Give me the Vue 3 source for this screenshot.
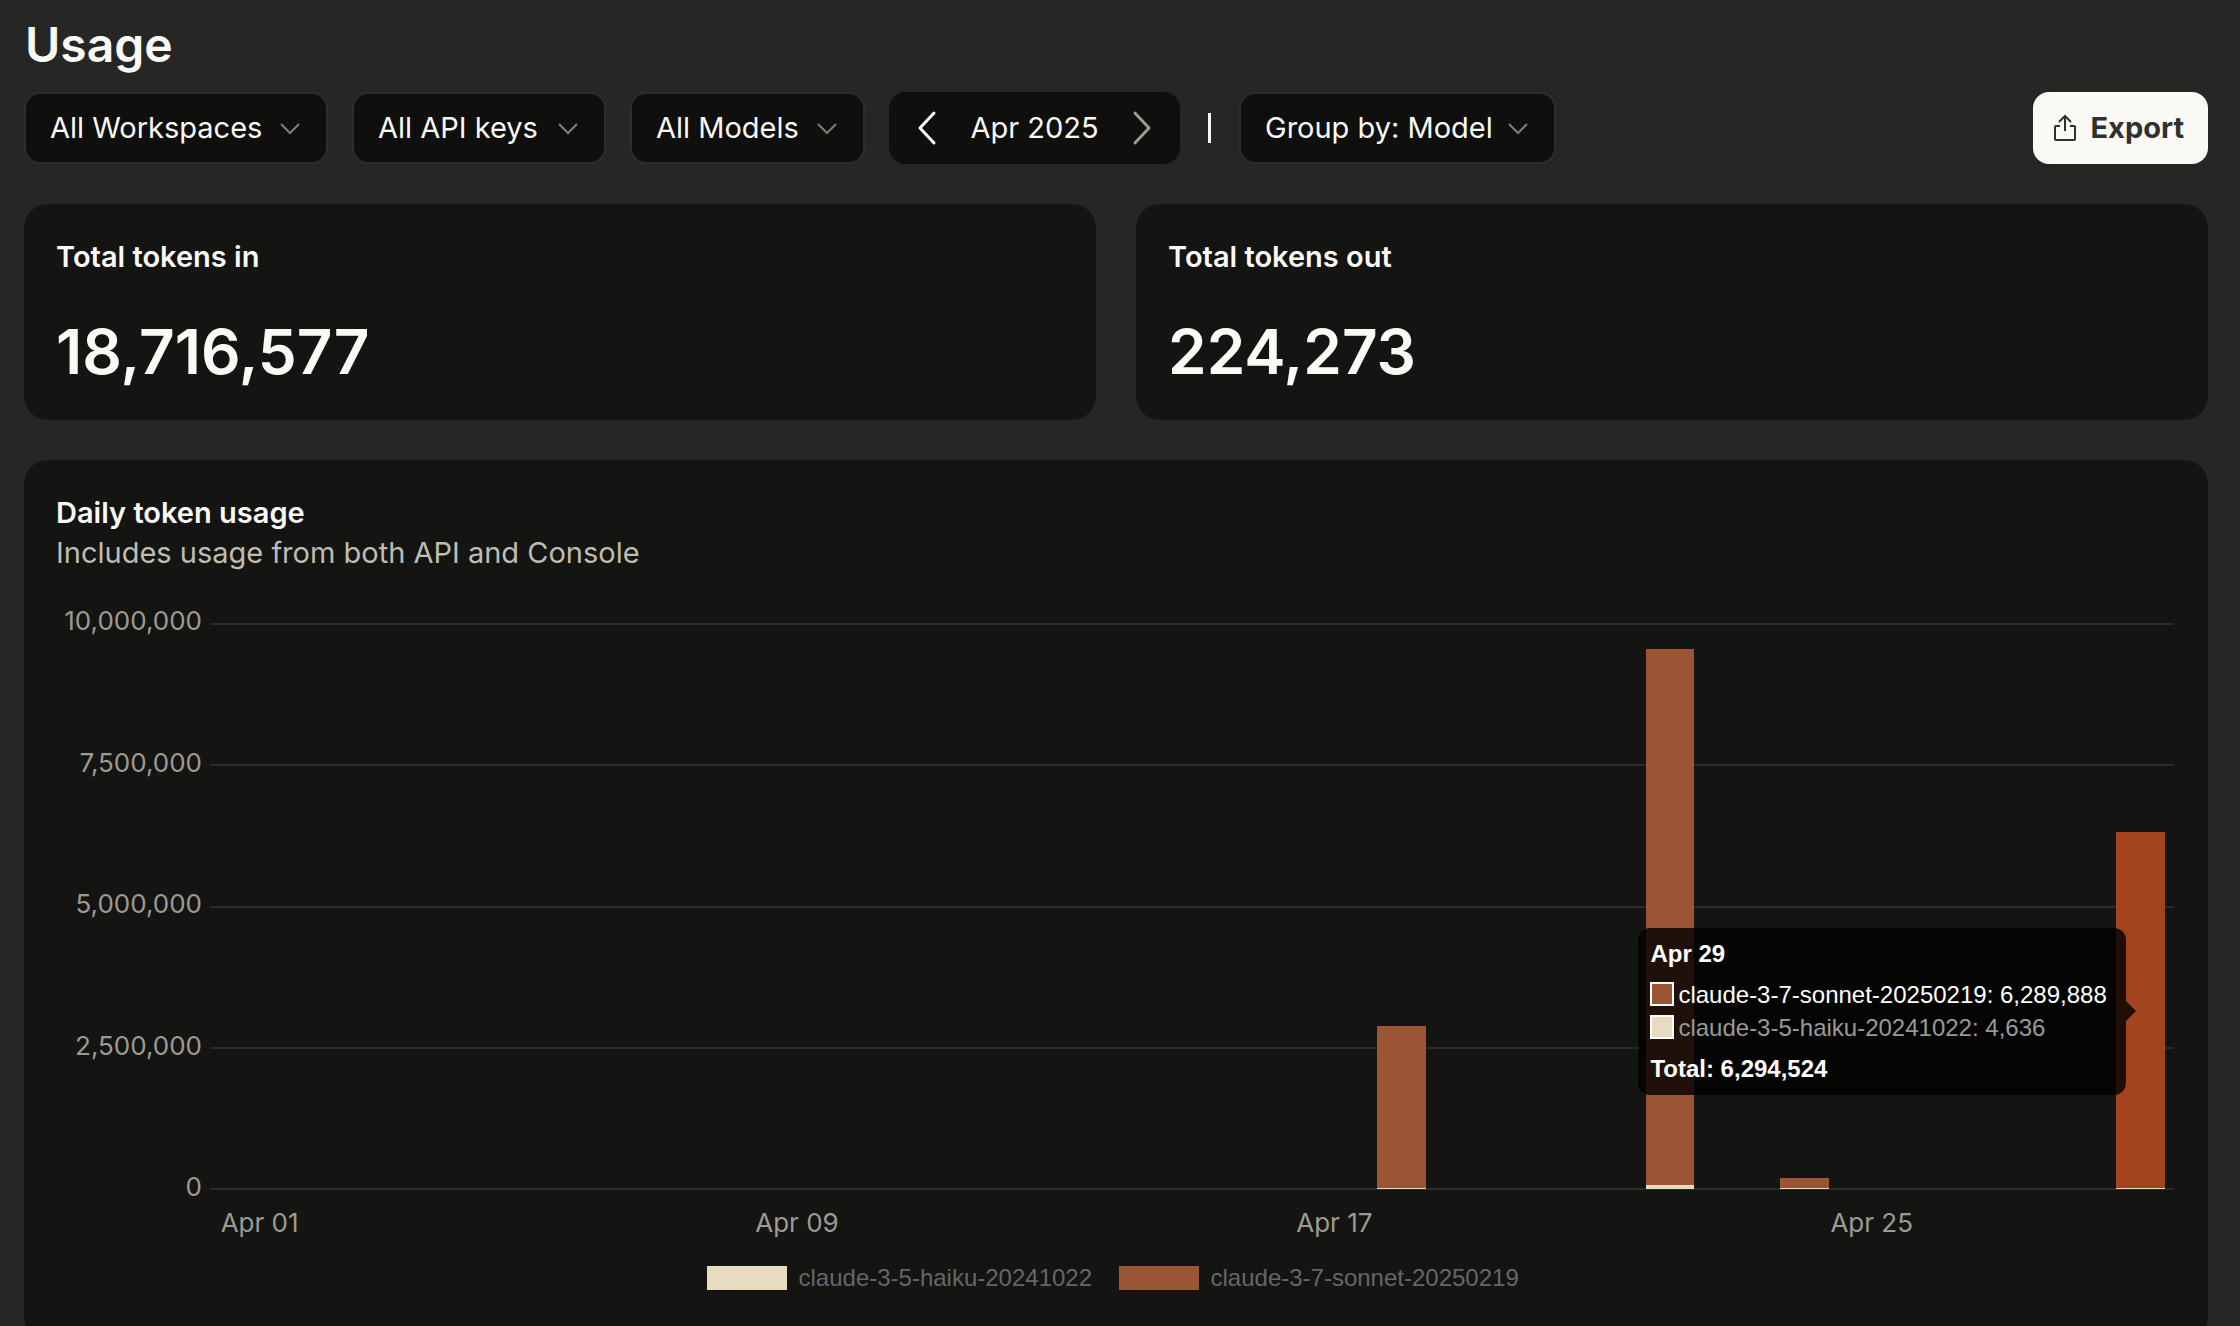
<script setup>
const HAIKU = 'claude-3-5-haiku-20241022'
const SONNET = 'claude-3-7-sonnet-20250219'
const MAX = 10000000

const filters = [
  { id: 'workspaces', label: 'Workspace', text: 'All Workspaces' },
  { id: 'api-keys', label: 'API key', text: 'All API keys' },
  { id: 'models', label: 'Model', text: 'All Models' },
]

const totals = [
  { title: 'Total tokens in', value: '18,716,577' },
  { title: 'Total tokens out', value: '224,273' },
]

const ticks = ['10,000,000', '7,500,000', '5,000,000', '2,500,000', '0']

const usage = {
  18: { sonnet: 2855000, haiku: 12000 },
  22: { sonnet: 9470000, haiku: 70000 },
  24: { sonnet: 175000, haiku: 12000 },
  29: { sonnet: 6289888, haiku: 4636, active: true },
}

const days = Array.from({ length: 29 }, (_, i) => {
  const day = i + 1
  return {
    day,
    label: i % 8 === 0 ? 'Apr ' + String(day).padStart(2, '0') : '',
    data: usage[day],
  }
})

const share = (tokens) => (tokens / MAX) * 100 + '%'
</script>

<template>
  <main class="page">
    <h1>Usage</h1>

    <div class="toolbar">
      <div v-for="f in filters" :key="f.id" class="picker" :class="f.id">
        <select :id="f.id" :aria-label="f.label">
          <option>{{ f.text }}</option>
        </select>
        <svg class="chevron" viewBox="0 0 20 12" aria-hidden="true"><path d="M1 1l9 9 9-9" /></svg>
      </div>

      <div class="month">
        <button type="button" aria-label="Previous month">
          <svg viewBox="0 0 20 34" aria-hidden="true"><path d="M17 2L3 17l14 15" /></svg>
        </button>
        <span>Apr 2025</span>
        <button type="button" class="next" aria-label="Next month">
          <svg viewBox="0 0 20 34" aria-hidden="true"><path d="M3 2l14 15L3 32" /></svg>
        </button>
      </div>

      <span class="divider"></span>

      <div class="picker group">
        <select id="group-by" aria-label="Group by">
          <option>Group by: Model</option>
        </select>
        <svg class="chevron" viewBox="0 0 20 12" aria-hidden="true"><path d="M1 1l9 9 9-9" /></svg>
      </div>

      <button type="button" class="export">
        <svg viewBox="0 0 24 28" aria-hidden="true">
          <path d="M7 12H3q-1 0-1 1v12q0 1 1 1h18q1 0 1-1V13q0-1-1-1h-4M12 17V2M6 8l6-6 6 6" />
        </svg>
        Export
      </button>
    </div>

    <div class="totals">
      <section v-for="t in totals" :key="t.title" class="card total">
        <h2>{{ t.title }}</h2>
        <p>{{ t.value }}</p>
      </section>
    </div>

    <section class="card usage">
      <h2>Daily token usage</h2>
      <p class="note">Includes usage from both API and Console</p>

      <div class="chart">
        <div class="y-axis">
          <span v-for="t in ticks" :key="t">{{ t }}</span>
        </div>
        <div class="plot">
          <div class="lines"><i v-for="t in ticks" :key="t"></i></div>
          <div class="bars">
            <div v-for="d in days" :key="d.day" class="day">
              <template v-if="d.data">
                <div class="sonnet" :class="{ active: d.data.active }" :style="{ height: share(d.data.sonnet) }"></div>
                <div class="haiku" :style="{ height: share(d.data.haiku) }"></div>
                <div v-if="d.data.active" class="anchor" :style="{ height: share(d.data.sonnet) }">
                  <div class="tooltip" role="tooltip">
                    <strong>Apr 29</strong>
                    <ul>
                      <li><i class="key sonnet"></i>{{ SONNET }}: 6,289,888</li>
                      <li class="dim"><i class="key haiku"></i>{{ HAIKU }}: 4,636</li>
                    </ul>
                    <strong>Total: 6,294,524</strong>
                  </div>
                </div>
              </template>
            </div>
          </div>
        </div>
        <div class="x-axis">
          <div v-for="d in days" :key="d.day"><span v-if="d.label">{{ d.label }}</span></div>
        </div>
      </div>

      <ul class="legend">
        <li><i class="haiku"></i>{{ HAIKU }}</li>
        <li><i class="sonnet"></i>{{ SONNET }}</li>
      </ul>
    </section>
  </main>
</template>

<style>
body {
  margin: 0;
  background: #262624;
}
</style>

<style scoped>
* {
  box-sizing: border-box;
}
.page {
  height: 100vh;
  overflow: hidden;
  padding: 15px 32px 0 24px;
  color: #faf9f5;
  font: 29px/40px Inter, "Liberation Sans", sans-serif;
}
h1, h2, p, ul {
  margin: 0;
  padding: 0;
}
ul {
  list-style: none;
}
h1 {
  padding-left: 1px;
  font-size: 48px;
  font-weight: 600;
  line-height: 60px;
}
h2 {
  font-size: 29px;
  font-weight: 600;
  line-height: 40px;
}

.toolbar {
  display: flex;
  align-items: center;
  gap: 24px;
  height: 72px;
  margin: 17px 0 40px;
}
.picker {
  position: relative;
  height: 72px;
}
.picker select {
  appearance: none;
  width: 100%;
  height: 100%;
  padding: 0 24px;
  border: 2px solid #2d2d2b;
  border-radius: 16px;
  background: #0f0f0d;
  color: inherit;
  font: inherit;
}
.workspaces { width: 304px; }
.api-keys { width: 254px; }
.models { width: 235px; }
.group { width: 317px; }
.chevron {
  position: absolute;
  top: 31px;
  right: 28px;
  width: 20px;
  height: 12px;
  fill: none;
  stroke: #7d7c77;
  stroke-width: 2;
  pointer-events: none;
}
.month {
  display: flex;
  align-items: center;
  justify-content: space-between;
  width: 291px;
  height: 72px;
  padding: 0 28px;
  border-radius: 16px;
  background: #0f0f0d;
}
.month button {
  display: flex;
  padding: 0;
  border: 0;
  background: none;
  color: #faf9f5;
}
.month .next {
  color: #9c9a92;
}
.month svg {
  width: 20px;
  height: 36px;
  fill: none;
  stroke: currentColor;
  stroke-width: 3;
  stroke-linecap: round;
  stroke-linejoin: round;
}
.divider {
  width: 3px;
  height: 30px;
  margin: 0 4px;
  background: #faf9f5;
}
.export {
  display: flex;
  align-items: center;
  gap: 14px;
  height: 72px;
  margin-left: auto;
  padding: 0 24px 0 20px;
  border: 0;
  border-radius: 16px;
  background: #faf9f5;
  color: #30302e;
  font: inherit;
  font-weight: 700;
}
.export svg {
  width: 24px;
  height: 28px;
  fill: none;
  stroke: currentColor;
  stroke-width: 2;
}

.card {
  border-radius: 24px;
  background: #141412;
}
.totals {
  display: grid;
  grid-template-columns: 1fr 1fr;
  gap: 40px;
}
.total {
  padding: 33px 32px 28px;
}
.total p {
  margin-top: 35px;
  font-size: 62px;
  font-weight: 600;
  line-height: 80px;
}
.usage {
  margin-top: 40px;
  padding: 33px 32px 48px;
}
.note {
  color: #bfbdb1;
}

.chart {
  display: grid;
  grid-template-columns: 146px 1fr;
  grid-template-rows: 566px auto;
  column-gap: 24px;
  margin-top: 50px;
  padding-right: 2px;
  color: #9c9a92;
  font-size: 26px;
  line-height: 28px;
}
.y-axis {
  display: flex;
  flex-direction: column;
  justify-content: space-between;
  margin: -16px 0 -12px;
  text-align: right;
}
.plot {
  position: relative;
}
.lines {
  position: absolute;
  inset: 0 0 -1px -16px;
  display: flex;
  flex-direction: column;
  justify-content: space-between;
}
.lines i {
  height: 2px;
  background: #2b2b29;
}
.bars {
  position: relative;
  display: grid;
  grid-template-columns: repeat(29, 1fr);
  height: 100%;
}
.day {
  position: relative;
  display: flex;
  flex-direction: column;
  justify-content: flex-end;
  padding: 0 14%;
}
.sonnet {
  background: #9b5534;
}
.sonnet.active {
  background: #a3441e;
}
.haiku {
  min-height: 1px;
  background: #e9dbc0;
}
.anchor {
  position: absolute;
  right: 50%;
  bottom: 0;
  display: flex;
  align-items: center;
}
.tooltip {
  position: relative;
  min-width: 488px;
  margin-right: 14px;
  padding: 11px 12px 12px;
  border-radius: 12px;
  background: rgba(0, 0, 0, 0.8);
  color: #fff;
  font: 24px/29px "Liberation Sans", sans-serif;
  white-space: nowrap;
}
.tooltip::after {
  content: "";
  position: absolute;
  top: 50%;
  left: 100%;
  border: 10px solid transparent;
  border-right: 0;
  border-left-color: rgba(0, 0, 0, 0.8);
  transform: translateY(-50%);
}
.tooltip strong {
  display: block;
}
.tooltip ul {
  display: grid;
  gap: 4px;
  margin: 12px 0;
}
.tooltip li {
  display: flex;
  align-items: center;
  gap: 4px;
}
.tooltip .dim {
  color: #999;
}
.key {
  width: 24px;
  height: 24px;
  border: 2px solid #fff;
}
.x-axis {
  grid-column: 2;
  display: grid;
  grid-template-columns: repeat(29, minmax(0, 1fr));
  height: 28px;
  margin-top: 20px;
}
.x-axis div {
  display: flex;
  justify-content: center;
  white-space: nowrap;
}

.legend {
  display: grid;
  grid-template-columns: 392px 407px;
  justify-content: center;
  gap: 20px;
  margin-top: 26px;
  color: #666;
  font: 24px/30px "Liberation Sans", sans-serif;
}
.legend li {
  display: flex;
  align-items: center;
  gap: 12px;
}
.legend i {
  width: 80px;
  height: 24px;
}
</style>
